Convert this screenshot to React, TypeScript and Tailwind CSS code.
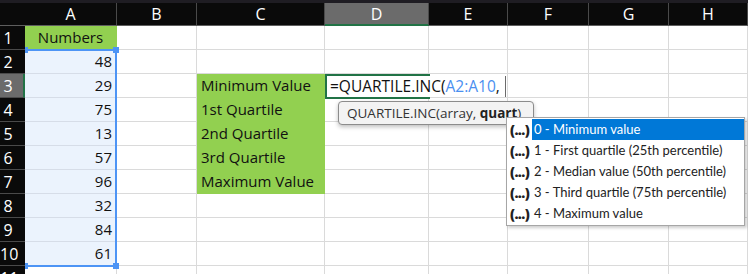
import React from 'react';

const cols = ['A', 'B', 'C', 'D', 'E', 'F', 'G', 'H'];
const numbers: Record<number, string> = { 2: '48', 3: '29', 4: '75', 5: '13', 6: '57', 7: '96', 8: '32', 9: '84', 10: '61' };
const labels: Record<number, string> = {
  3: 'Minimum Value',
  4: '1st Quartile',
  5: '2nd Quartile',
  6: '3rd Quartile',
  7: 'Maximum Value',
};
const options = [
  '0 - Minimum value',
  '1 - First quartile (25th percentile)',
  '2 - Median value (50th percentile)',
  '3 - Third quartile (75th percentile)',
  '4 - Maximum value',
];

const Cell: React.FC<{ row: number; col: string }> = ({ row, col }) => {
  if (col === 'A' && row === 1) {
    return (
      <div className="flex items-center justify-center border-r border-b border-[#92d050] bg-[#92d050] text-[#111]">
        Numbers
      </div>
    );
  }
  if (col === 'A' && numbers[row]) {
    return (
      <div className="flex items-center justify-end border-r border-b border-[#d6dde8] bg-[#ebf3fd] pr-[4px] text-[#111]">
        {numbers[row]}
      </div>
    );
  }
  if (col === 'C' && labels[row]) {
    return (
      <div className="flex items-center border-r border-b border-[#92d050] bg-[#92d050] pl-[4px] text-[#111]">
        {labels[row]}
      </div>
    );
  }
  return <div className="border-r border-b border-[#dadada] bg-white" />;
};

export default function App() {
  const rows = Array.from({ length: 11 }, (_, i) => i + 1);

  return (
    <div className="relative h-[274px] w-[748px] overflow-hidden bg-white font-['Open_Sans',sans-serif] text-[15px]">
      <div className="h-[3px] bg-[#1f1d23]" />
      <div className="grid grid-cols-[25px_92px_80px_128px_104px_79px_81px_80px_79px] grid-rows-[23px_repeat(11,24px)]">
        {/* header row */}
        <div className="border-b border-[#5e5e5e] bg-[#0a0a0a]" />
        {cols.map((c) => (
          <div
            key={c}
            className={
              c === 'D'
                ? 'flex items-center justify-center border-r border-[#4a4a4a] border-b-2 border-b-[#217346] bg-[#6b6b6b] text-[16px] text-white'
                : 'flex items-center justify-center border-r border-[#4a4a4a] border-b border-b-[#5e5e5e] bg-[#0a0a0a] text-[16px] text-white'
            }
          >
            {c}
          </div>
        ))}

        {rows.map((r) => (
          <React.Fragment key={r}>
            <div
              className={
                r === 3
                  ? 'flex items-center border-b border-[#4a4a4a] border-r-2 border-r-[#217346] bg-[#6b6b6b] text-[16px] text-white'
                  : 'flex items-center border-b border-[#4a4a4a] bg-[#0a0a0a] text-[16px] text-white'
              }
            >
              <span className="w-[16px] text-center">{r}</span>
            </div>
            {cols.map((c) => (
              <Cell key={c} row={r} col={c} />
            ))}
          </React.Fragment>
        ))}
      </div>

      {/* selection A2:A10 */}
      <div className="absolute left-[25px] top-[49px] h-[218px] w-[92px] border-t-2 border-r-2 border-b-2 border-[#4d94f5]" />
      <div className="absolute left-[25px] top-[47px] h-[6px] w-[3px] bg-[#4d94f5]" />
      <div className="absolute left-[113px] top-[47px] h-[6px] w-[6px] bg-[#4d94f5]" />
      <div className="absolute left-[25px] top-[263px] h-[6px] w-[3px] bg-[#4d94f5]" />
      <div className="absolute left-[113px] top-[263px] h-[6px] w-[6px] bg-[#4d94f5]" />

      {/* active cell D3 */}
      <div className="absolute left-[325px] top-[74px] h-[25px] w-[105px] border-2 border-[#217346]" />
      <div className="absolute left-[327px] top-[76px] flex h-[21px] w-[179px] items-center border-r border-[#6b6b6b] bg-white pl-[3px] text-[15.5px] text-[#111]">
        =QUARTILE.INC(<span className="text-[#4a8ff0]">A2:A10</span>,
      </div>

      {/* function tooltip */}
      <div className="absolute left-[338px] top-[101px] flex h-[24px] w-[196px] items-center whitespace-pre rounded-[4px] border border-[#8c8c8c] bg-[#f3f3f3] pl-[8px] text-[13.5px] text-[#333] shadow-[0_2px_4px_rgba(0,0,0,0.25)]">
        QUARTILE.INC(array, <span className="font-bold text-[#222]">quart</span>)
      </div>

      {/* argument dropdown */}
      <div className="absolute left-[506px] top-[117px] w-[239px] border border-[#a6a6a6] bg-white py-[1px] font-['Lato',sans-serif] shadow-[2px_2px_3px_rgba(0,0,0,0.2)]">
        {options.map((o, i) => (
          <div key={o} className="flex h-[21px] items-center whitespace-nowrap">
            <span className="w-[25px] overflow-hidden pl-[3px] font-['Open_Sans',sans-serif] text-[14px] font-extrabold tracking-[-0.6px] text-[#222]">
              (...)
            </span>
            <span
              className={
                i === 0
                  ? 'flex h-full flex-1 items-center bg-[#0078d7] pl-[2px] text-[13px] text-white'
                  : 'flex h-full flex-1 items-center pl-[2px] text-[13px] text-[#222]'
              }
            >
              {o}
            </span>
          </div>
        ))}
      </div>
    </div>
  );
}
